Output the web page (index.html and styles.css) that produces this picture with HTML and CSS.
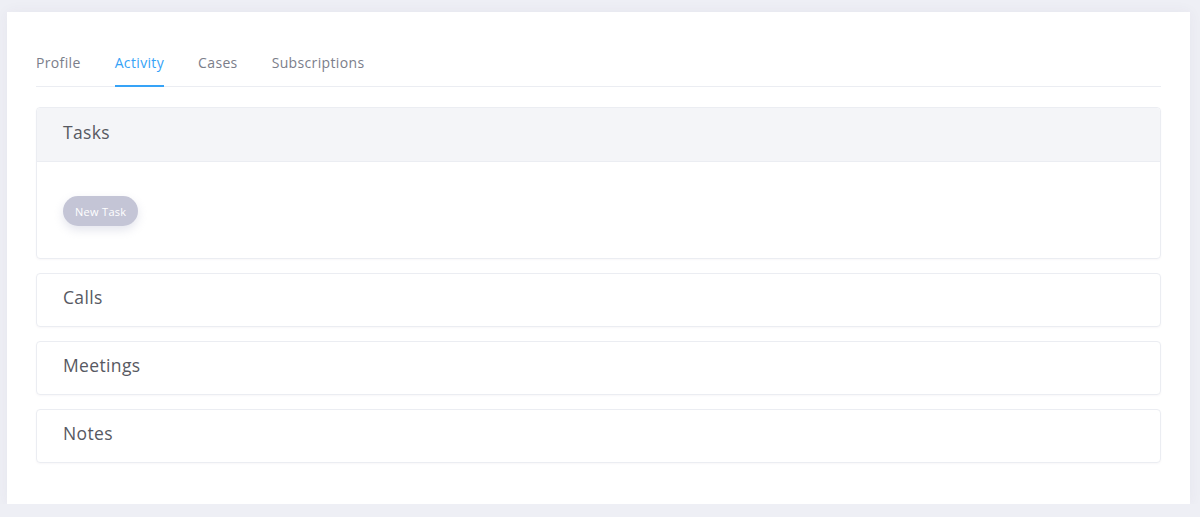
FILE: index.html
```html
<!DOCTYPE html>
<html>
<head>
    <meta charset="utf-8">
    <link rel="stylesheet" href="styles.css">
</head>
<body>
    <div class="portlet">
        <div class="tabs">
            <a class="tab">Profile</a>
            <a class="tab active">Activity</a>
            <a class="tab">Cases</a>
            <a class="tab">Subscriptions</a>
        </div>

        <div class="section open">
            <div class="section-head">Tasks</div>
            <div class="section-body">
                <button class="btn">New Task</button>
            </div>
        </div>

        <div class="section">
            <div class="section-head">Calls</div>
        </div>

        <div class="section">
            <div class="section-head">Meetings</div>
        </div>

        <div class="section">
            <div class="section-head">Notes</div>
        </div>
    </div>
</body>
</html>
```

FILE: styles.css
```css
* {
    box-sizing: border-box;
    margin: 0;
    padding: 0;
}

body {
    background: #eeeff5;
    font-family: 'Open Sans', 'Noto Sans', sans-serif;
    color: #575962;
    padding: 12px 10px 0 7px;
}

.portlet {
    background: white;
    height: 492px;
    padding: 28px 29px 0 29px;
    box-shadow: 0 0 13px rgba(82, 63, 105, 0.05);
}

.tabs {
    display: flex;
    gap: 34px;
    border-bottom: 1px solid #ebedf2;
    margin-bottom: 20px;
}

.tab {
    font-size: 14px;
    line-height: 20px;
    letter-spacing: 0.35px;
    padding: 13px 0 12px;
    color: #7b7e8a;
    border-bottom: 2px solid transparent;
    margin-bottom: -1px;
    cursor: pointer;
}

.tab.active {
    color: #36a3f7;
    border-bottom-color: #36a3f7;
}

.section {
    border: 1px solid #ebedf2;
    border-radius: 4px;
    margin-bottom: 14px;
    box-shadow: 0 1px 2px rgba(82, 63, 105, 0.04);
}

.section-head {
    height: 52px;
    padding: 0 26px 6px;
    display: flex;
    align-items: center;
    font-size: 17.5px;
    letter-spacing: 0.35px;
    color: #575962;
}

.section.open .section-head {
    background: #f4f5f8;
    border-bottom: 1px solid #ebedf2;
    height: 54px;
    border-radius: 4px 4px 0 0;
}

.section-body {
    padding: 34px 26px 32px;
}

.btn {
    background: #c4c5d6;
    color: white;
    border: none;
    height: 30px;
    padding: 0 12px;
    border-radius: 15px;
    font-family: inherit;
    font-size: 11px;
    letter-spacing: 0.3px;
    box-shadow: 0 4px 10px rgba(196, 197, 214, 0.45);
}
```
